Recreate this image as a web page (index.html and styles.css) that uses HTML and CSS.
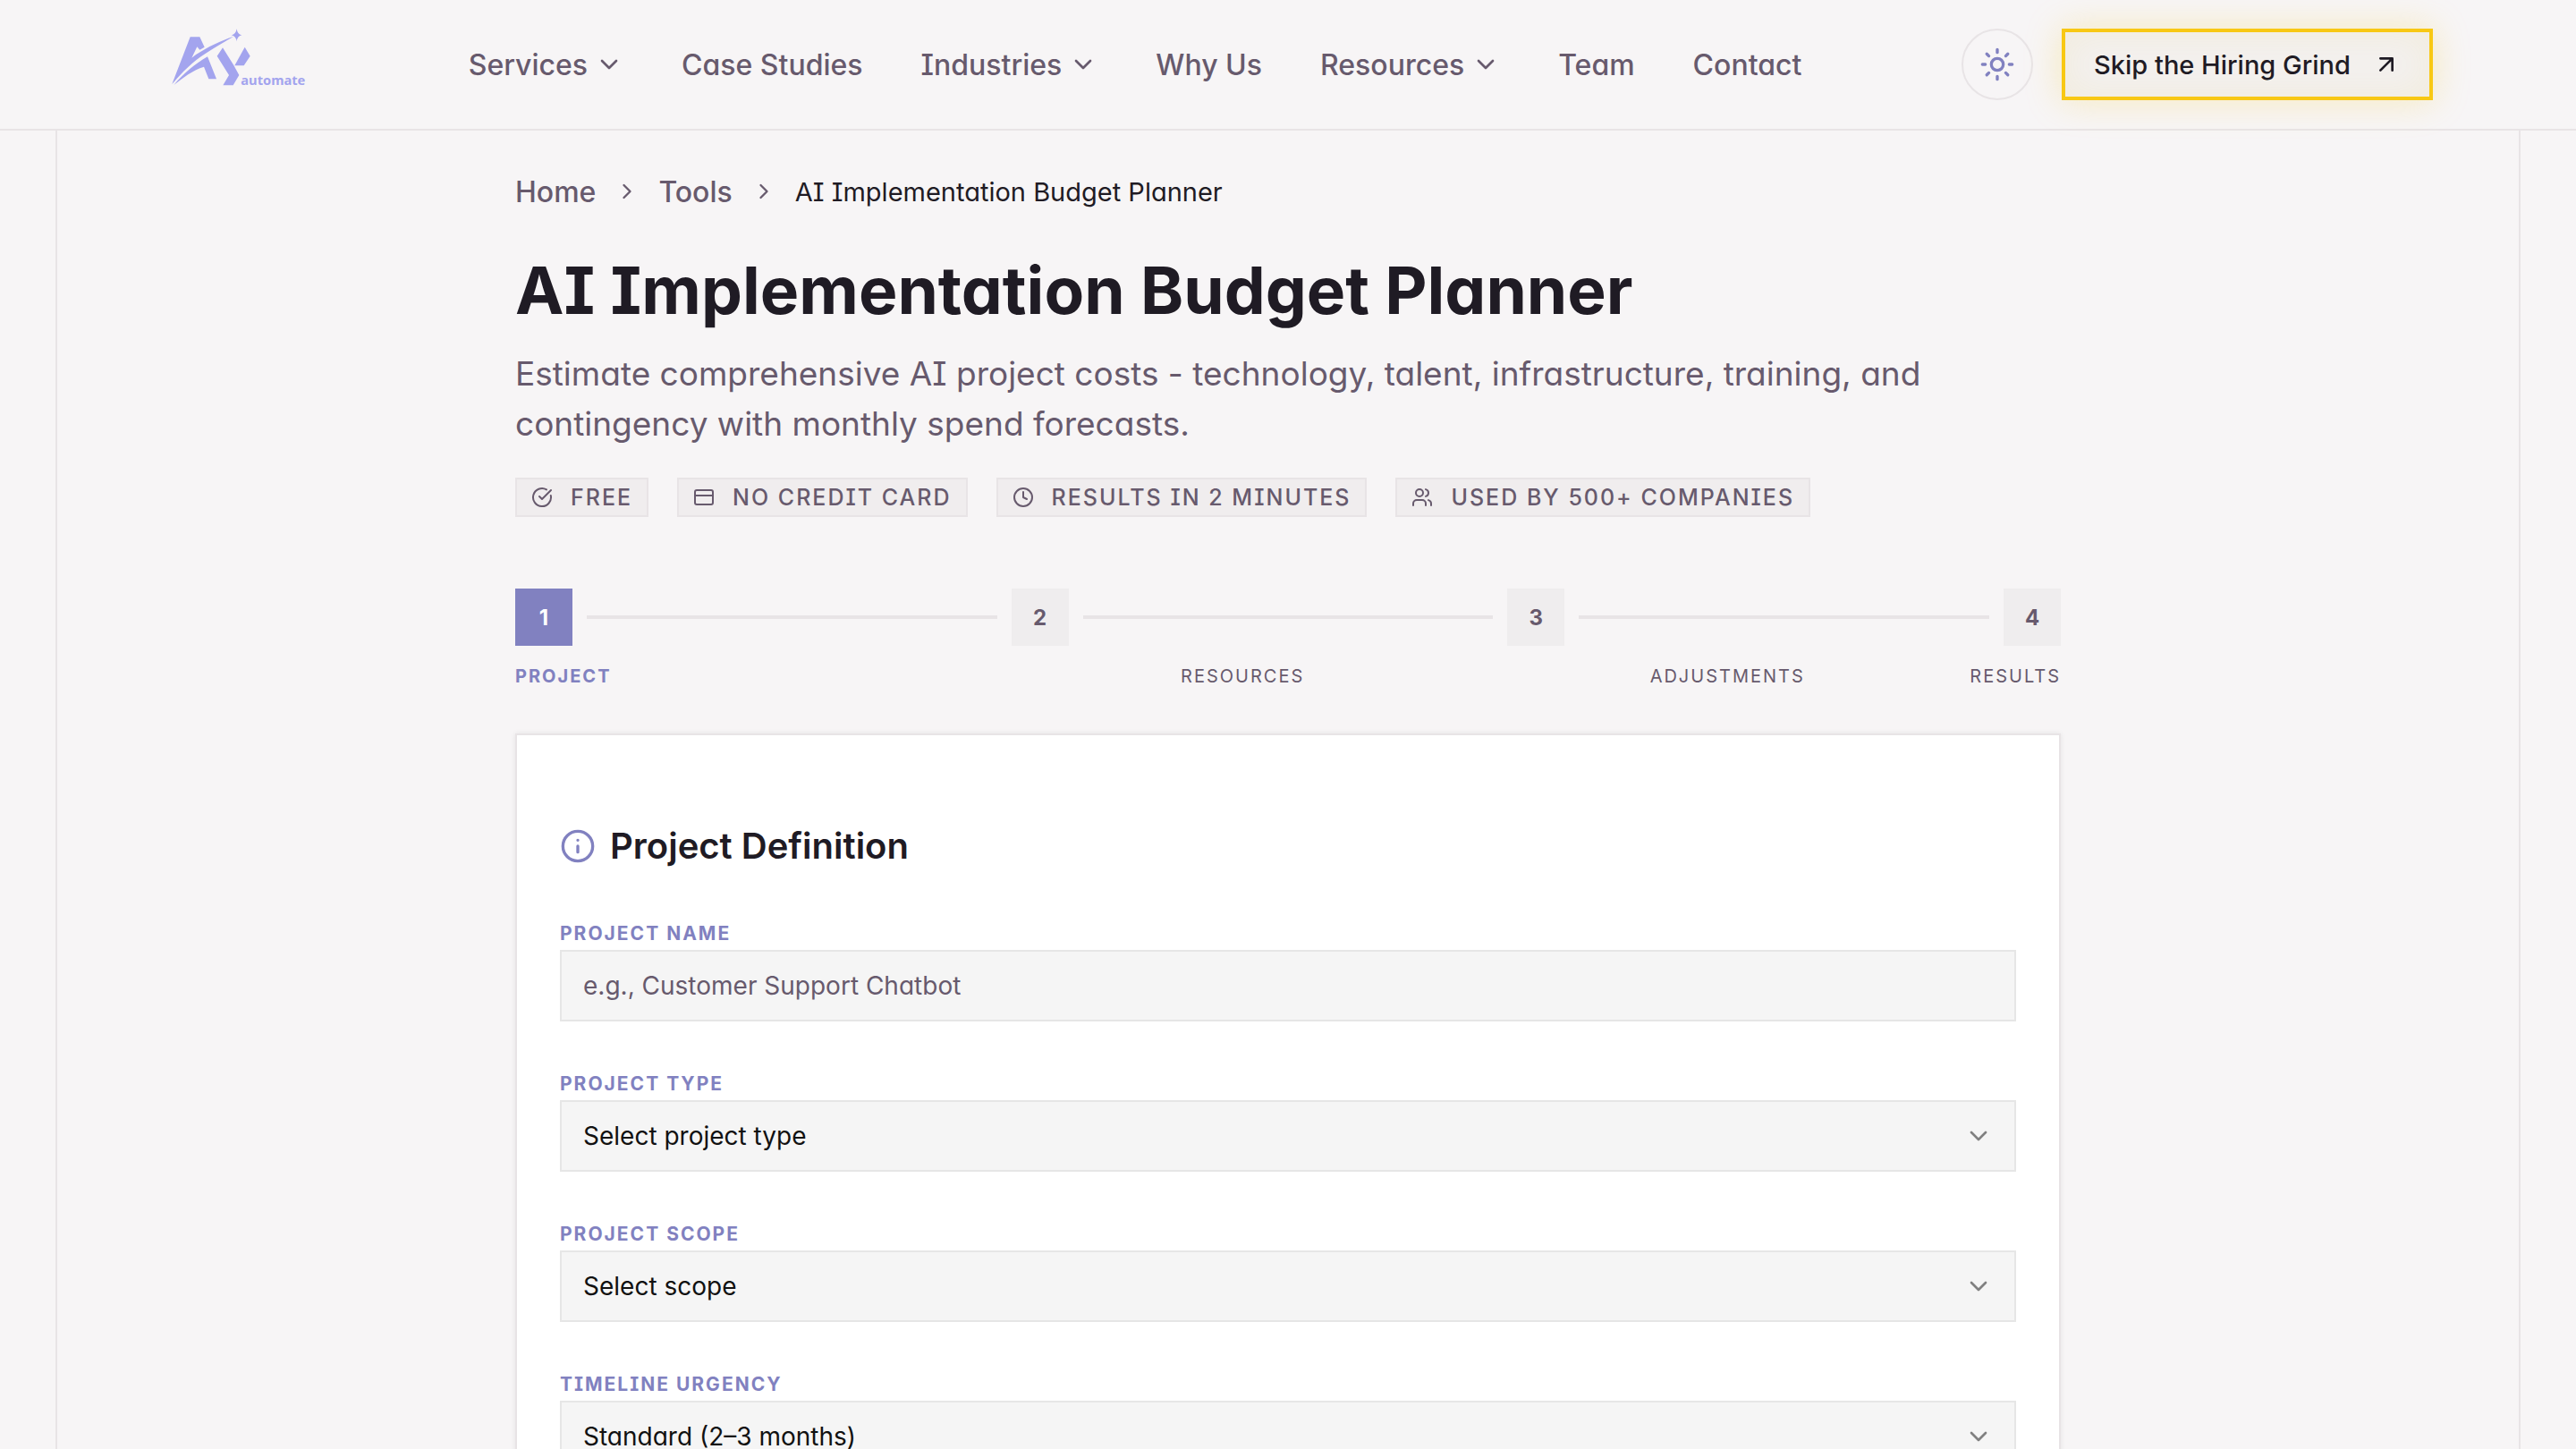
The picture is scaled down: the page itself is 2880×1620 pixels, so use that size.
FILE: index.html
```html
<!DOCTYPE html>
<html lang="en">
<head>
  <meta charset="utf-8">
  <title>AI Implementation Budget Planner</title>
  <link rel="stylesheet" href="styles.css">
</head>
<body>
  <!-- Header -->
  <header class="header">
    <a class="logo" href="#" aria-label="AY automate">
      <svg class="logo-mark" viewBox="0 21 555 330">
        <path d="M97 252 L158 94 H190 L206 128 L190 137 L181 127 L163 164 C205 132 255 110 303 92 C250 126 205 148 165 182 C135 208 118 228 97 252Z"/>
        <path d="M103 255 C138 215 172 186 216 160 L246 235 H220 L204 194 C168 204 132 232 103 255Z"/>
        <path d="M248 158 L267 130 L304 189 L322 222 L302 256 H268 L288 222Z"/>
        <path d="M341 128 L359 158 L338 190 H307Z"/>
        <path d="M314 67 Q316 85 331 88 Q316 91 314 109 Q311 91 296 88 Q311 85 314 67Z"/>
        <text x="328" y="255">automate</text>
      </svg>
    </a>

    <nav class="nav">
      <a href="#">Services <svg class="icon" viewBox="0 0 24 24"><path d="m6 9 6 6 6-6"/></svg></a>
      <a href="#">Case Studies</a>
      <a href="#">Industries <svg class="icon" viewBox="0 0 24 24"><path d="m6 9 6 6 6-6"/></svg></a>
      <a href="#">Why Us</a>
      <a href="#">Resources <svg class="icon" viewBox="0 0 24 24"><path d="m6 9 6 6 6-6"/></svg></a>
      <a href="#">Team</a>
      <a href="#">Contact</a>
    </nav>

    <div class="actions">
      <button class="theme-toggle" type="button" aria-label="Toggle theme">
        <svg class="icon icon-lg" viewBox="0 0 24 24"><circle cx="12" cy="12" r="4"/><path d="M12 2v2M12 20v2M4.93 4.93l1.41 1.41M17.66 17.66l1.41 1.41M2 12h2M20 12h2M6.34 17.66l-1.41 1.41M19.07 4.93l-1.41 1.41"/></svg>
      </button>
      <a class="cta" href="#">Skip the Hiring Grind
        <svg class="icon" viewBox="0 0 24 24"><path d="M7 7h10v10M7 17 17 7"/></svg>
      </a>
    </div>
  </header>

  <main class="main">
    <div class="content">
      <nav class="breadcrumb" aria-label="Breadcrumb">
        <a href="#">Home</a>
        <svg class="icon icon-md" viewBox="0 0 24 24"><path d="m9 18 6-6-6-6"/></svg>
        <a href="#">Tools</a>
        <svg class="icon icon-md" viewBox="0 0 24 24"><path d="m9 18 6-6-6-6"/></svg>
        <span class="current">AI Implementation Budget Planner</span>
      </nav>

      <h1 class="title">AI Implementation Budget Planner</h1>
      <p class="subtitle">Estimate comprehensive AI project costs - technology, talent, infrastructure, training, and contingency with monthly spend forecasts.</p>

      <ul class="badges">
        <li class="badge">
          <svg class="icon icon-sm" viewBox="0 0 24 24"><path d="M21.801 10A10 10 0 1 1 17 3.335"/><path d="m9 11 3 3L22 4"/></svg>
          Free
        </li>
        <li class="badge">
          <svg class="icon icon-sm" viewBox="0 0 24 24"><rect x="2" y="4" width="20" height="16" rx="2"/><path d="M2 10h20"/></svg>
          No credit card
        </li>
        <li class="badge">
          <svg class="icon icon-sm" viewBox="0 0 24 24"><circle cx="12" cy="12" r="10"/><path d="M12 6v6l4 2"/></svg>
          Results in 2 minutes
        </li>
        <li class="badge">
          <svg class="icon icon-sm" viewBox="0 0 24 24"><path d="M16 21v-2a4 4 0 0 0-4-4H6a4 4 0 0 0-4 4v2"/><circle cx="9" cy="7" r="4"/><path d="M22 21v-2a4 4 0 0 0-3-3.870M16 3.130a4 4 0 0 1 0 7.750"/></svg>
          Used by 500+ companies
        </li>
      </ul>

      <!-- Steps -->
      <div class="steps">
        <span class="step active">1</span>
        <span class="step-line"></span>
        <span class="step">2</span>
        <span class="step-line"></span>
        <span class="step">3</span>
        <span class="step-line"></span>
        <span class="step">4</span>
      </div>
      <div class="step-labels">
        <span class="active">Project</span>
        <span>Resources</span>
        <span>Adjustments</span>
        <span>Results</span>
      </div>

      <!-- Form -->
      <form class="card">
        <h2 class="card-title">
          <svg class="icon icon-xl" viewBox="0 0 24 24"><circle cx="12" cy="12" r="10"/><path d="M12 16v-4M12 8h.01"/></svg>
          Project Definition
        </h2>

        <div class="field">
          <label for="name">Project name</label>
          <input class="control" id="name" type="text" placeholder="e.g., Customer Support Chatbot">
        </div>

        <div class="field">
          <label for="type">Project type</label>
          <div class="select">
            <select class="control" id="type">
              <option>Select project type</option>
            </select>
            <svg class="icon" viewBox="0 0 24 24"><path d="m6 9 6 6 6-6"/></svg>
          </div>
        </div>

        <div class="field">
          <label for="scope">Project scope</label>
          <div class="select">
            <select class="control" id="scope">
              <option>Select scope</option>
            </select>
            <svg class="icon" viewBox="0 0 24 24"><path d="m6 9 6 6 6-6"/></svg>
          </div>
        </div>

        <div class="field">
          <label for="urgency">Timeline urgency</label>
          <div class="select">
            <select class="control" id="urgency">
              <option>Standard (2–3 months)</option>
            </select>
            <svg class="icon" viewBox="0 0 24 24"><path d="m6 9 6 6 6-6"/></svg>
          </div>
        </div>
      </form>
    </div>
  </main>
</body>
</html>
```
FILE: styles.css
```css
:root {
  --bg: #f7f5f6;
  --line: #e8e4e6;
  --muted: #675a6d;
  --text: #1f1b24;
  --primary: #8181c0;
  --yellow: #f8c814;
}

* {
  box-sizing: border-box;
}

body {
  margin: 0;
  background: var(--bg);
  color: var(--text);
  font-family: "Inter", sans-serif;
  /* single-storey a, serifed capital I */
  font-feature-settings: "cv11", "cv08";
  font-size: 28px;
}

a {
  color: inherit;
  text-decoration: none;
}

/* Icons */
.icon {
  width: 32px;
  height: 32px;
  flex: none;
  fill: none;
  stroke: currentColor;
  stroke-width: 2;
  stroke-linecap: round;
  stroke-linejoin: round;
}

.icon-sm {
  width: 24px;
  height: 24px;
}

.icon-md {
  width: 28px;
  height: 28px;
}

.icon-lg {
  width: 40px;
  height: 40px;
}

.icon-xl {
  width: 40px;
  height: 40px;
  color: var(--primary);
}

/* Header */
.header {
  display: flex;
  align-items: center;
  justify-content: space-between;
  height: 146px;
  padding: 0 160px;
  border-bottom: 2px solid var(--line);
}

.logo-mark {
  display: block;
  width: 185px;
  height: 110px;
  fill: #a3a4ee;
}

.logo-mark text {
  font-family: "Noto Sans", sans-serif;
  font-size: 44px;
  font-weight: 700;
}

.nav {
  display: flex;
  gap: 65px;
  color: var(--muted);
  font-size: 32px;
  font-weight: 500;
}

.nav a {
  display: flex;
  align-items: center;
  gap: 8px;
}

.actions {
  display: flex;
  gap: 32px;
}

.theme-toggle {
  display: flex;
  align-items: center;
  justify-content: center;
  width: 80px;
  height: 80px;
  padding: 0;
  border: 2px solid var(--line);
  border-radius: 50%;
  background: transparent;
  color: var(--primary);
}

.cta {
  display: flex;
  align-items: center;
  gap: 24px;
  height: 80px;
  padding: 0 32px;
  border: 4px solid var(--yellow);
  background: #f3f0ee;
  box-shadow: 0 0 40px rgba(248, 200, 20, 0.26), inset 0 0 40px rgba(248, 200, 20, 0.08);
  font-size: 29px;
  font-weight: 500;
}

/* Page */
.main {
  margin: 0 62px;
  border: solid var(--line);
  border-width: 0 2px;
}

.content {
  max-width: 1728px;
  margin: 0 auto;
  padding: 48px 0;
}

.breadcrumb {
  display: flex;
  align-items: center;
  gap: 21px;
  height: 40px;
  color: var(--muted);
}

.breadcrumb a {
  font-size: 32px;
  font-weight: 500;
}

.current {
  color: var(--text);
  font-size: 29px;
}

.title {
  margin: 46px 0 0;
  font-size: 73px;
  font-weight: 700;
  line-height: 90px;
}

.subtitle {
  margin: 20px 0 0;
  color: var(--muted);
  font-size: 37px;
  line-height: 56px;
}

.badges {
  display: flex;
  gap: 32px;
  margin: 32px 0 0;
  padding: 0;
  list-style: none;
}

.badge {
  display: flex;
  align-items: center;
  gap: 20px;
  height: 44px;
  padding: 0 16px;
  border: 2px solid var(--line);
  background: #f0edee;
  color: var(--muted);
  font-size: 25px;
  font-weight: 500;
  letter-spacing: 2px;
  text-transform: uppercase;
}

/* Steps */
.steps {
  display: flex;
  align-items: center;
  gap: 16px;
  margin-top: 80px;
}

.step {
  display: flex;
  align-items: center;
  justify-content: center;
  width: 64px;
  height: 64px;
  background: #efedee;
  color: var(--muted);
  font-size: 24px;
  font-weight: 700;
}

.step.active {
  background: var(--primary);
  color: #fff;
}

.step-line {
  flex: 1;
  height: 4px;
  background: var(--line);
}

.step-labels {
  display: flex;
  margin-top: 20px;
  color: var(--muted);
  font-size: 20px;
  line-height: 28px;
  letter-spacing: 2px;
  text-align: center;
  text-transform: uppercase;
}

.step-labels span {
  flex: 1;
}

.step-labels span:first-child {
  text-align: left;
}

.step-labels span:last-child {
  flex: none;
}

.step-labels .active {
  color: var(--primary);
  font-weight: 700;
}

/* Form card */
.card {
  margin-top: 50px;
  padding: 96px 48px;
  border: 2px solid var(--line);
  background: #fff;
  box-shadow: 0 0 6px rgba(0, 0, 0, 0.08);
}

.card-title {
  display: flex;
  align-items: center;
  gap: 16px;
  margin: 0 0 56px;
  font-size: 40px;
  font-weight: 600;
  line-height: 56px;
}

.field {
  margin-bottom: 56px;
}

.field label {
  display: block;
  margin-bottom: 4px;
  color: var(--primary);
  font-size: 21px;
  font-weight: 700;
  line-height: 28px;
  letter-spacing: 2px;
  text-transform: uppercase;
}

.control {
  display: block;
  width: 100%;
  height: 80px;
  padding: 0 24px;
  border: 2px solid #e6e6e6;
  border-radius: 0;
  background: #f5f5f5;
  color: #111;
  font: inherit;
  font-feature-settings: inherit;
  appearance: none;
}

.control::placeholder {
  color: var(--muted);
  opacity: 1;
}

.select {
  position: relative;
}

.select .icon {
  position: absolute;
  top: 24px;
  right: 26px;
  color: #808080;
  pointer-events: none;
}
```
